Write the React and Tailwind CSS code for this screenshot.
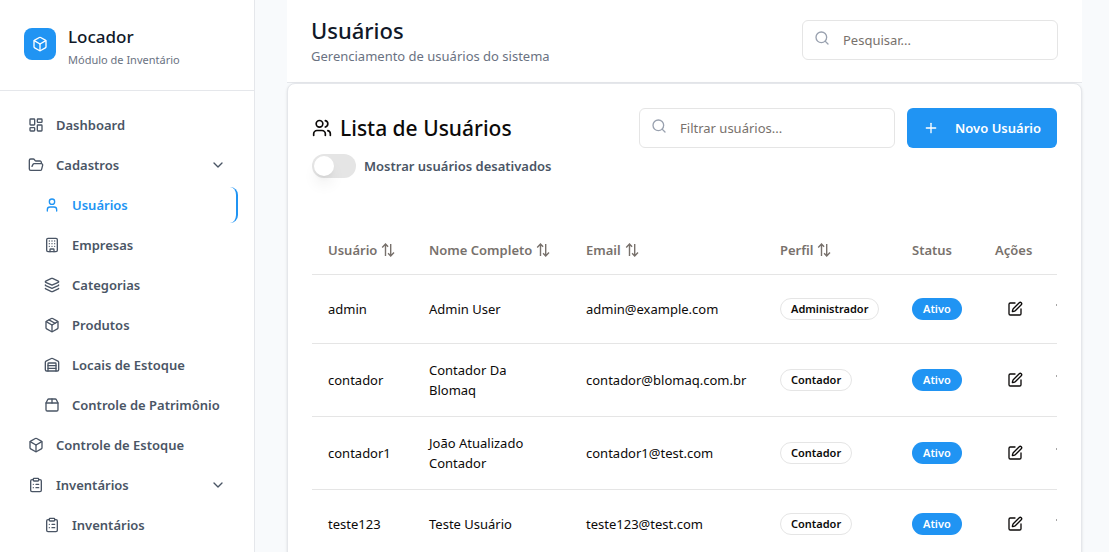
import {
  Box, LayoutDashboard, FolderOpen, User, Building, Layers, Package, Warehouse, Package2,
  ClipboardList, ChevronDown, Search, Users, Plus, SquarePen, Trash2,
} from "lucide-react";

const nav = [
  { label: "Dashboard", icon: LayoutDashboard },
  { label: "Cadastros", icon: FolderOpen, group: true },
  { label: "Usuários", icon: User, child: true, active: true },
  { label: "Empresas", icon: Building, child: true },
  { label: "Categorias", icon: Layers, child: true },
  { label: "Produtos", icon: Package, child: true },
  { label: "Locais de Estoque", icon: Warehouse, child: true },
  { label: "Controle de Patrimônio", icon: Package2, child: true },
  { label: "Controle de Estoque", icon: Box },
  { label: "Inventários", icon: ClipboardList, group: true },
  { label: "Inventários", icon: ClipboardList, child: true },
];

const users = [
  { login: "admin", name: "Admin User", email: "admin@example.com", role: "Administrador" },
  { login: "contador", name: "Contador Da Blomaq", email: "contador@blomaq.com.br", role: "Contador" },
  { login: "contador1", name: "João Atualizado Contador", email: "contador1@test.com", role: "Contador" },
  { login: "teste123", name: "Teste Usuário", email: "teste123@test.com", role: "Contador" },
];

const columns = [
  { label: "Usuário", sortable: true, width: "w-[101px]" },
  { label: "Nome Completo", sortable: true, width: "w-[157px]" },
  { label: "Email", sortable: true, width: "w-[194px]" },
  { label: "Perfil", sortable: true, width: "w-[132px]" },
  { label: "Status", width: "w-[83px]" },
  { label: "Ações", width: "w-[120px]" },
];

function NavItem({ label, icon: Icon, group, child, active }) {
  const body = (
    <>
      <Icon className="size-4 shrink-0" />
      <span className="grow text-left">{label}</span>
      {group && <ChevronDown className="size-4" />}
    </>
  );
  const base = "flex h-9 w-full items-center gap-3 text-[13px] leading-5 font-semibold";
  if (group) {
    return <button type="button" aria-expanded="true" className={`${base} px-3 text-gray-600`}>{body}</button>;
  }
  return (
    <a
      href="#"
      aria-current={active ? "page" : undefined}
      className={`${base} ${child ? "pl-7" : "pl-3"} ${active ? "rounded-lg border-r-2 border-[#2094f3] text-[#2094f3]" : "text-gray-600"}`}
    >
      {body}
    </a>
  );
}

function SearchBox({ label, placeholder }) {
  return (
    <label className="relative block w-64">
      <Search className="absolute top-2.5 left-3 size-4 text-gray-400" />
      <input
        type="text"
        aria-label={label}
        placeholder={placeholder}
        className="h-10 w-full rounded-md border border-[#e5e5e5] bg-white pr-3 pl-10 text-[13px] leading-5 placeholder:text-[#78716c]"
      />
    </label>
  );
}

function SortIcon() {
  return (
    <svg viewBox="0 0 14 14" className="size-3.5" fill="none" stroke="currentColor" strokeWidth="1.4" aria-hidden="true">
      <path d="M4.5 13V1M1.2 4.4 4.5 1l2.6 2.7M9.7 1v12M7.1 10.3 9.7 13l3.3-3.4" />
    </svg>
  );
}

export default function App() {
  return (
    <div className="flex h-screen overflow-hidden bg-[#f8fafc] font-['Noto_Sans','Open_Sans',sans-serif] text-[#0c0a09]">
      <aside className="w-[255px] shrink-0 border-r border-gray-200 bg-white">
        <div className="flex items-start gap-3 border-b border-gray-200 px-6 pt-6 pb-5">
          <div className="mt-1 flex size-8 items-center justify-center rounded-lg bg-[#2094f3] text-white">
            <Box className="size-4" />
          </div>
          <div>
            <p className="text-[17px] leading-[26px] font-medium text-gray-900">Locador</p>
            <p className="text-[11px] leading-5 text-gray-500">Módulo de Inventário</p>
          </div>
        </div>
        <nav className="flex flex-col gap-1 p-4">
          {nav.map((item, i) => <NavItem key={i} {...item} />)}
        </nav>
      </aside>

      <main className="min-w-0 grow overflow-hidden pr-[27px] pl-8">
        <header className="flex items-center justify-between border-b border-gray-200 bg-white px-6 pt-3.5 pb-4">
          <div>
            <h1 className="text-[22px] leading-8 font-medium text-gray-900">Usuários</h1>
            <p className="text-[13px] leading-5 text-gray-500">Gerenciamento de usuários do sistema</p>
          </div>
          <SearchBox label="Pesquisar" placeholder="Pesquisar..." />
        </header>

        <section className="rounded-lg border border-gray-200 bg-white p-6 shadow-sm">
          <div className="flex items-start justify-between gap-3">
            <div>
              <h2 className="flex items-center gap-2 text-[21px] leading-10 font-medium">
                <Users className="size-5" />
                Lista de Usuários
              </h2>
              <label className="relative mt-1.5 flex items-center gap-2 text-[13px] leading-5 font-semibold text-gray-600">
                <input type="checkbox" role="switch" className="peer sr-only" />
                <span className="flex h-6 w-11 items-center rounded-full bg-[#e5e5e5] p-0.5 peer-checked:justify-end peer-checked:bg-[#2094f3]">
                  <span className="size-5 rounded-full bg-white shadow-lg" />
                </span>
                Mostrar usuários desativados
              </label>
            </div>
            <div className="flex gap-3">
              <SearchBox label="Filtrar usuários" placeholder="Filtrar usuários..." />
              <button type="button" className="flex h-10 items-center gap-4 rounded-md bg-[#2094f3] px-4 text-[13px] leading-5 font-semibold whitespace-nowrap text-white">
                <Plus className="size-4" />
                Novo Usuário
              </button>
            </div>
          </div>

          <div className="mt-12 overflow-hidden">
            <table className="w-[787px] table-fixed text-[13px] leading-5">
              <thead>
                <tr className="border-b border-[#e5e5e5] text-left text-[#78716c]">
                  {columns.map((c) => (
                    <th key={c.label} className={`h-12 px-4 font-semibold whitespace-nowrap ${c.width}`}>
                      {c.sortable ? (
                        <button type="button" className="flex items-center gap-1">{c.label}<SortIcon /></button>
                      ) : c.label}
                    </th>
                  ))}
                </tr>
              </thead>
              <tbody>
                {users.map((u) => (
                  <tr key={u.login} className="border-b border-[#e5e5e5]">
                    <td className="p-4">{u.login}</td>
                    <td className="p-4">{u.name}</td>
                    <td className="p-4 whitespace-nowrap">{u.email}</td>
                    <td className="p-4">
                      <span className="inline-flex h-[22px] items-center rounded-full border border-[#e5e5e5] px-2.5 text-[11px] font-semibold">{u.role}</span>
                    </td>
                    <td className="p-4">
                      <span className="inline-flex h-[22px] items-center rounded-full border border-transparent bg-[#2094f3] px-2.5 text-[11px] font-semibold text-white">Ativo</span>
                    </td>
                    <td className="p-4">
                      <div className="flex gap-2">
                        <button type="button" aria-label="Editar" className="flex h-9 w-10 shrink-0 items-center justify-center"><SquarePen className="size-4" /></button>
                        <button type="button" aria-label="Excluir" className="flex h-9 w-10 shrink-0 items-center justify-center"><Trash2 className="size-4" /></button>
                      </div>
                    </td>
                  </tr>
                ))}
              </tbody>
            </table>
          </div>
        </section>
      </main>
    </div>
  );
}
